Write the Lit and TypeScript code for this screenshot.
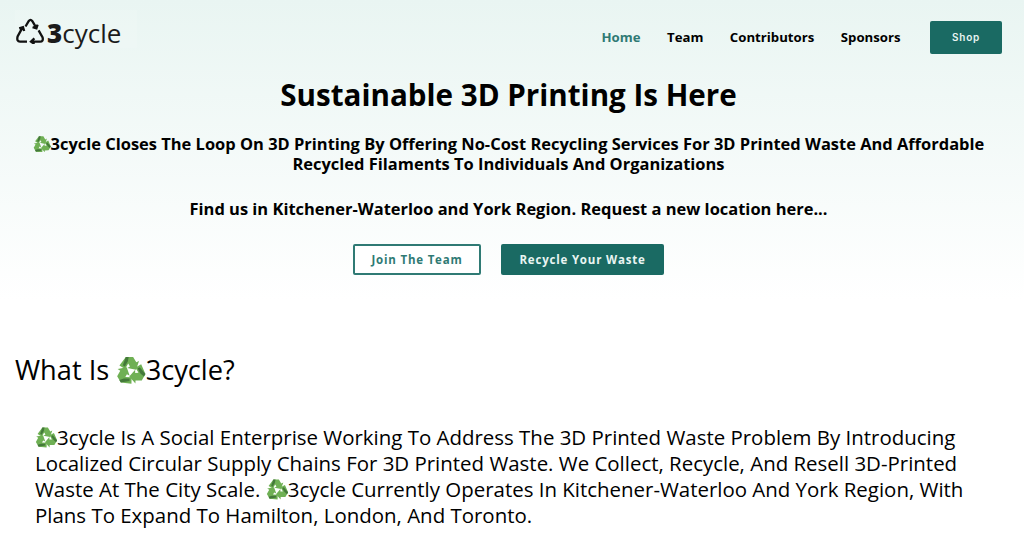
import { html, css, svg, LitElement } from 'lit';
import { customElement } from 'lit/decorators.js';

// one arm of the recycling mark, repeated at 120 degree steps
const armPath = 'M8 1.6 L14 1.6 L16.6 6 L18.8 4.8 L16.4 12 L9.2 10.6 L11.4 9.3 L10 7 L7.4 11.4 L2.8 8.6 Z';

const recycle = () => html`<svg class="emoji" viewBox="0 0 24 24" aria-hidden="true">${[0, 120, 240].map(
  (r) => svg`<g transform="rotate(${r} 12 13.2)">
        <path d=${armPath} fill="#6fb054"></path>
        <path d="M8 1.6 L10.4 1.6 L9.6 5.4 L7.2 9.4 L5.6 8.4 Z" fill="#44793a"></path>
      </g>`,
)}</svg>`;

@customElement('app-root')
export class AppRoot extends LitElement {
  render() {
    return html`
      <header class="nav">
        <a class="logo">
          <svg class="logo-mark" viewBox="0 0 28 26" aria-hidden="true">
            <g fill="none" stroke="#111" stroke-width="2.3">
              <path d="M9.5 8.5 L12.8 3 Q14.5 0.8 16.2 3 L20.2 9.6 M16.6 9.2 L20.4 10.4 L21.6 6.6"></path>
              <path d="M22.6 12.4 L26.6 19.4 Q27.6 23.6 24 23.6 L16 23.6 M18.4 20.4 L15 23.6 L18.4 26"></path>
              <path d="M6.6 9.4 L1.6 18.4 Q0.4 23.6 4 23.6 L11 23.6 M3.2 10.4 L7 9.2 L8.2 13"></path>
            </g>
          </svg>
          <span class="logo-text"><b>3</b>cycle</span>
        </a>
        <nav class="links">
          <a class="link active">Home</a>
          <a class="link">Team</a>
          <a class="link">Contributors</a>
          <a class="link">Sponsors</a>
          <a class="btn solid shop">Shop</a>
        </nav>
      </header>

      <section class="hero">
        <h1>Sustainable 3D Printing Is Here</h1>
        <p class="lead">
          ${recycle()}3cycle Closes The Loop On 3D Printing By Offering No-Cost Recycling Services For
          3D Printed Waste And Affordable Recycled Filaments To Individuals And Organizations
        </p>
        <p class="lead where">Find us in Kitchener-Waterloo and York Region. Request a new location here...</p>
        <div class="actions">
          <a class="btn outline">Join The Team</a>
          <a class="btn solid">Recycle Your Waste</a>
        </div>
      </section>

      <section class="about">
        <h2>What Is ${recycle()}3cycle?</h2>
        <p class="body">
          ${recycle()}3cycle Is A Social Enterprise Working To Address The 3D Printed Waste Problem By
          Introducing Localized Circular Supply Chains For 3D Printed Waste. We Collect, Recycle, And
          Resell 3D-Printed Waste At The City Scale. ${recycle()}3cycle Currently Operates In
          Kitchener-Waterloo And York Region, With Plans To Expand To Hamilton, London, And Toronto.
        </p>
      </section>
    `;
  }

  static styles = css`
    :host {
      display: block;
      height: 553px;
      overflow: hidden;
      font-family: 'Open Sans', sans-serif;
      color: #000;
      background: linear-gradient(180deg, #e9f5f2 0, #ffffff 300px);
    }

    .emoji {
      width: 1.08em;
      height: 1.08em;
      vertical-align: -0.15em;
    }

    .nav {
      box-sizing: border-box;
      display: flex;
      align-items: flex-start;
      justify-content: space-between;
      padding: 10px 22px 0 15px;
      height: 75px;
    }

    .logo {
      box-sizing: border-box;
      display: flex;
      align-items: center;
      gap: 3px;
      width: 122px;
      height: 38px;
      padding-left: 1px;
      background: rgba(255, 255, 255, 0.1);
    }

    .logo-mark {
      width: 28px;
      height: 26px;
      margin-top: 4px;
    }

    .logo-text {
      font-size: 26px;
      line-height: 34px;
      margin-top: 8px;
      color: #1b1b1b;
    }

    .logo-text b {
      font-weight: 800;
    }

    .links {
      display: flex;
      align-items: center;
      gap: 26.5px;
      padding-top: 11px;
    }

    .link {
      font-size: 13.2px;
      font-weight: 700;
      margin-top: -2px;
    }

    .link.active {
      color: #2f7a74;
    }

    .btn {
      box-sizing: border-box;
      display: flex;
      align-items: center;
      justify-content: center;
      height: 31px;
      border-radius: 2px;
      font-size: 11.5px;
      font-weight: 700;
      letter-spacing: 0.8px;
      white-space: nowrap;
    }

    .btn.solid {
      background: #1a6a63;
      color: #e9f5f2;
    }

    .btn.outline {
      background: #fff;
      color: #2f7a74;
      border: 2px solid #2f7a74;
    }

    .btn.shop {
      width: 72px;
      height: 33px;
      margin-left: 3px;
      padding-bottom: 2px;
      font-family: Inter, sans-serif;
      font-size: 10px;
      font-weight: 600;
    }

    .hero {
      text-align: center;
      padding: 0 37px 0 30px;
    }

    h1 {
      margin: 0;
      font-size: 29.6px;
      line-height: 40px;
      font-weight: 700;
    }

    .lead {
      margin: 19px 0 0;
      font-size: 16.47px;
      line-height: 20px;
      font-weight: 700;
    }

    .lead.where {
      margin-top: 25px;
    }

    .actions {
      display: flex;
      justify-content: center;
      gap: 20px;
      margin-top: 25px;
    }

    .actions .btn {
      width: 128px;
    }

    .actions .btn.solid {
      width: 163px;
    }

    .about {
      padding: 0 15px;
    }

    h2 {
      margin: 76px 0 0;
      font-size: 27.2px;
      line-height: 38px;
      font-weight: 500;
    }

    .body {
      margin: 35px 0 0;
      padding: 0 30px 0 20px;
      font-size: 20.45px;
      line-height: 26px;
      font-weight: 500;
    }
  `;
}
